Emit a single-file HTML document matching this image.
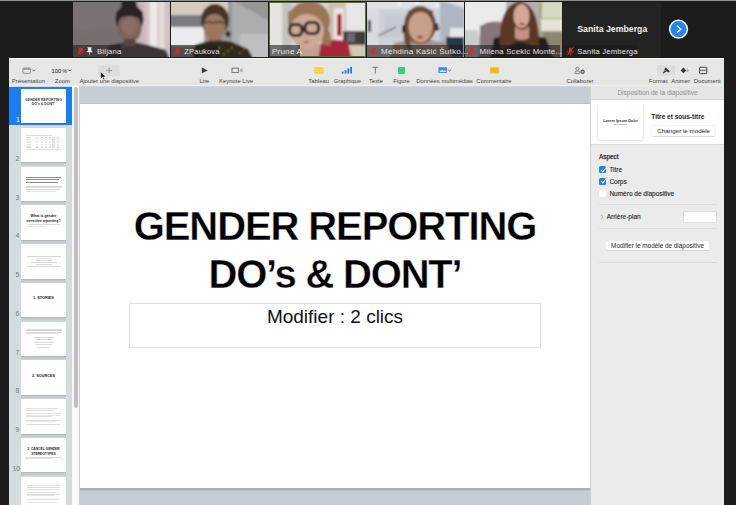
<!DOCTYPE html>
<html><head><meta charset="utf-8">
<style>
*{box-sizing:border-box;margin:0;padding:0}
html,body{width:736px;height:505px;overflow:hidden;background:#1c1c1c;font-family:"Liberation Sans",sans-serif;position:relative}
.a{position:absolute}
.t{position:absolute;white-space:nowrap;line-height:1}
/* video strip */
#topline{left:0;top:0;width:736px;height:1px;background:#8e8e8e}
.tile{position:absolute;top:2px;height:55px;width:97px;overflow:hidden;background:#555}
.lbl{position:absolute;left:0;bottom:0;height:12px;background:rgba(20,20,20,.72);color:#e6e6e6;font-size:7.5px;line-height:12px;padding-left:4px;white-space:nowrap}
/* window */
#win{left:9px;top:58px;width:714.5px;height:447px;background:#e9e9e9}
#toolbar{left:9px;top:58px;width:714.5px;height:28px;background:#e6e6e5;border-top:1.2px solid #f7f7f7;border-bottom:1px solid #eeeeee}
.lab{position:absolute;top:78.4px;width:80px;text-align:center;font-size:5.9px;color:#454545;white-space:nowrap;line-height:6px}
#sidebar{left:9px;top:86px;width:70px;height:419px;background:#d3dbdd}
.th{position:absolute;left:21px;width:45px;height:34.5px;background:#fff;box-shadow:0 1px 0 #b3b8bc,0 3.6px 0 #c5cacd}
.th .ln{position:absolute}
.tt{position:absolute;left:0;width:45px;text-align:center;font-weight:bold;color:#222;white-space:nowrap}
.tn{position:absolute;left:15.6px;font-size:6.8px;line-height:7px;color:#767c82}
.cb{position:absolute;left:599.4px;width:7px;height:7px;border-radius:1.5px;background:#fff}
.cb.on{background:#1f82f0}
.cb.on::after{content:"";position:absolute;left:2.5px;top:.7px;width:1.8px;height:3.8px;border:solid #fff;border-width:0 .9px .9px 0;transform:rotate(40deg)}
#canvas{left:79px;top:86px;width:511px;height:419px;background:#c6cdd5;border-top:1.5px solid #d0d5dc}
#slide{left:80px;top:104px;width:510px;height:384px;background:#fff;box-shadow:0 -1px 0 #b9bec4,0 2.5px 0 #abb0b5}
#panel{left:590px;top:86px;width:133.5px;height:419px;background:#ebebeb;border-left:1px solid #d0d0d0}
</style></head><body>
<svg class="a" style="left:0;top:0" width="736" height="58" viewBox="0 0 736 58">
<defs>
  <filter id="bl" x="-5%" y="-5%" width="110%" height="110%"><feGaussianBlur stdDeviation="1.1"/></filter>
  <filter id="bl2" x="-20%" y="-20%" width="140%" height="140%"><feGaussianBlur stdDeviation="2.2"/></filter>
  <clipPath id="c1"><rect x="73" y="2" width="97" height="55"/></clipPath>
  <clipPath id="c2"><rect x="171" y="2" width="97" height="55"/></clipPath>
  <clipPath id="c3"><rect x="269" y="2" width="97" height="55"/></clipPath>
  <clipPath id="c4"><rect x="367" y="2" width="97" height="55"/></clipPath>
  <clipPath id="c5"><rect x="465" y="2" width="97" height="55"/></clipPath>
  <linearGradient id="g1w" x1="0" y1="0" x2="1" y2="1"><stop offset="0" stop-color="#767072"/><stop offset=".6" stop-color="#786e70"/><stop offset="1" stop-color="#62585a"/></linearGradient>
  <linearGradient id="g1c" x1="0" y1="0" x2="1" y2="0"><stop offset="0" stop-color="#b8a8aa"/><stop offset=".5" stop-color="#e2d6d6"/><stop offset="1" stop-color="#c8babb"/></linearGradient>
</defs>
<rect x="0" y="0" width="736" height="1" fill="#8e8e8e"/>

<!-- tile 1 Biljana -->
<g clip-path="url(#c1)"><g filter="url(#bl)">
  <rect x="70" y="0" width="103" height="60" fill="url(#g1w)"/>
  <rect x="70" y="0" width="70" height="30" fill="#7e7476" opacity=".45"/>
  <rect x="136" y="0" width="37" height="60" fill="url(#g1c)"/>
  <rect x="150" y="0" width="7" height="60" fill="#f2ecec" opacity=".85"/>
  <rect x="160" y="0" width="4" height="60" fill="#ece4e4" opacity=".7"/>
  <path d="M104 60 L108 46 Q128 39 148 45 L166 50 L170 60 Z" fill="#3a3634"/>
  <ellipse cx="129.5" cy="19" rx="14" ry="15" fill="#2c2426"/>
  <ellipse cx="129.5" cy="28" rx="12" ry="14.5" fill="#7c625a"/>
  <ellipse cx="129.5" cy="26" rx="8" ry="9" fill="#8a6e66"/>
  <path d="M117 20 Q129 12 142 20 L143 12 Q129 4 116 12 Z" fill="#2c2426"/>
  <ellipse cx="129" cy="4" rx="8" ry="5" fill="#2a2224"/>
  <rect x="124" y="39" width="11" height="7" fill="#584440"/>
</g></g>

<!-- tile 2 ZPaukova -->
<g clip-path="url(#c2)"><g filter="url(#bl)">
  <rect x="168" y="0" width="103" height="60" fill="#9a9a98"/>
  <rect x="168" y="0" width="62" height="16" fill="#d4ccbc"/>
  <rect x="168" y="15" width="34" height="13" fill="#7a7c82"/>
  <rect x="168" y="27" width="36" height="19" fill="#ececef"/>
  <rect x="228" y="0" width="43" height="60" fill="#969692"/>
  <path d="M232 0 L271 22 V60 L232 60 Z" fill="#acaeae"/>
  <rect x="240" y="34" width="31" height="26" fill="#bdbfc2"/>
  <rect x="208" y="36" width="13" height="10" fill="#8c6a56"/>
  <path d="M192 60 L195 45 Q213 38 232 42 L248 49 L254 60 Z" fill="#2e2a1e"/>
  <circle cx="205" cy="50" r=".8" fill="#c8a040"/><circle cx="232" cy="48" r=".8" fill="#c8a040"/><circle cx="240" cy="53" r=".8" fill="#c8a040"/><circle cx="224" cy="54" r=".8" fill="#c8a040"/><circle cx="214" cy="55" r=".8" fill="#c8a040"/><circle cx="236" cy="44" r=".8" fill="#c8a040"/><circle cx="244" cy="49" r=".8" fill="#c8a040"/><circle cx="228" cy="51" r=".8" fill="#c8a040"/><circle cx="219" cy="48" r=".8" fill="#c8a040"/>
  <ellipse cx="215" cy="20" rx="14" ry="16" fill="#443428"/>
  <ellipse cx="214.5" cy="27" rx="11" ry="13.5" fill="#9a7660"/>
  <path d="M203 18 Q214 10 227 18 L227 13 Q214 6 203 13 Z" fill="#443428"/>
  <ellipse cx="228" cy="34" rx="2.5" ry="3" fill="#262626"/>
  <path d="M203 23 Q208 21 213 23 Q218 21 225 23" fill="none" stroke="#3a2c24" stroke-width="1.3"/>
</g></g>

<!-- tile 3 Prune A -->
<g clip-path="url(#c3)"><g filter="url(#bl)">
  <rect x="266" y="0" width="103" height="60" fill="#d8d6d2"/>
  <rect x="266" y="0" width="18" height="60" fill="#e6e4e2"/>
  <rect x="282" y="0" width="10" height="60" fill="#c6c4c0"/>
  <rect x="328" y="3" width="38" height="42" fill="#ccc0b0"/>
  <rect x="334" y="8" width="10" height="34" fill="#ebe7e2"/>
  <rect x="337" y="14" width="4.5" height="22" fill="#a81c2e"/>
  <rect x="346" y="2" width="20" height="30" fill="#e8e6e4"/>
  <rect x="343" y="31" width="23" height="14" fill="#403c3c"/>
  <rect x="347" y="33" width="8" height="9" fill="#6a6a6a"/>
  <rect x="344" y="45" width="22" height="15" fill="#d2c6b4"/>
  <path d="M296 60 L298 44 L322 44 L324 60 Z" fill="#c4a090"/>
  <path d="M318 60 L321 43 Q334 37 348 42 L352 60 Z" fill="#a8283a"/>
  <ellipse cx="309" cy="21" rx="21" ry="20" fill="#9a7656"/>
  <path d="M320 20 Q334 30 330 46 L322 44 Z" fill="#9a7656"/>
  <ellipse cx="307" cy="31" rx="17" ry="17" fill="#cca898"/>
  <path d="M288 22 Q302 9 326 16 L326 10 Q305 2 288 12 Z" fill="#9a7656"/>
  <rect x="289.6" y="24.5" width="12.4" height="11" rx="4.5" fill="none" stroke="#1a1210" stroke-width="3"/>
  <rect x="305" y="22.4" width="13.6" height="11.2" rx="4.5" fill="none" stroke="#1a1210" stroke-width="3"/>
  <ellipse cx="306" cy="42" rx="3" ry="1.2" fill="#a07070"/>
</g>
  <rect x="269.5" y="2.5" width="96" height="54" fill="none" stroke="#5c6e3c" stroke-width="1"/>
</g>

<!-- tile 4 Mehdina -->
<g clip-path="url(#c4)"><g filter="url(#bl)">
  <rect x="364" y="0" width="103" height="60" fill="#cdd1d8"/>
  <rect x="364" y="0" width="103" height="9" fill="#dde0e4"/>
  <rect x="367" y="8" width="12" height="40" fill="#d8dbe0"/>
  <rect x="384" y="14" width="18" height="24" fill="#c6cad2"/>
  <path d="M378 36 L396 27" stroke="#4e525a" stroke-width="1.2"/>
  <path d="M437 30 L450 22" stroke="#4e525a" stroke-width="1.2"/>
  <rect x="368" y="20" width="3" height="12" fill="#3a4050"/>
  <path d="M440 0 L464 8 V60 H440 Z" fill="#aeb6c2"/>
  <rect x="450" y="28" width="14" height="10" fill="#e4e8ee"/>
  <rect x="446" y="37" width="18" height="20" fill="#2c3444"/>
  <path d="M390 60 L394 43 Q420 36 446 43 L452 60 Z" fill="#a89088"/>
  <ellipse cx="420" cy="25" rx="16" ry="19" fill="#6a4a38"/>
  <path d="M404 28 Q402 46 412 52 L408 28 Z" fill="#6a4a38"/>
  <ellipse cx="420.5" cy="27" rx="12" ry="15.5" fill="#c8a08a"/>
  <path d="M408 16 Q420 8 433 16 L433 11 Q420 4 408 11 Z" fill="#6a4a38"/>
  <ellipse cx="420" cy="37" rx="3" ry="1.6" fill="#8a5a50"/>
  <rect x="402" y="25" width="3.2" height="8" rx="1.5" fill="#222"/>
  <rect x="435" y="23" width="3.2" height="8" rx="1.5" fill="#222"/>
  <circle cx="399" cy="4" r="1.6" fill="#fff"/><circle cx="417" cy="3" r="1.6" fill="#fff"/><circle cx="437" cy="5" r="1.6" fill="#fff"/>
</g></g>

<!-- tile 5 Milena -->
<g clip-path="url(#c5)"><g filter="url(#bl)">
  <rect x="462" y="0" width="103" height="60" fill="#d8d6d4"/>
  <rect x="462" y="0" width="46" height="36" fill="#ebebeb"/>
  <rect x="462" y="30" width="16" height="26" fill="#c8ccd0"/>
  <path d="M479 60 L480 26 Q492 19 504 23 L506 60 Z" fill="#86767c"/>
  <rect x="506" y="0" width="34" height="40" fill="#b4aeb0"/>
  <rect x="539" y="0" width="26" height="60" fill="#a8a48c"/>
  <rect x="542" y="2" width="22" height="16" fill="#d6dac2"/>
  <rect x="541" y="19" width="23" height="12" fill="#e6e2d6"/>
  <rect x="543" y="32" width="20" height="28" fill="#8a8670"/>
  <path d="M490 60 L494 38 Q520 31 546 38 L554 60 Z" fill="#201a1a"/>
  <path d="M500 50 Q497 6 520 1 Q540 5 539 48 L530 46 Q520 38 510 46 Z" fill="#5a3826"/>
  <path d="M515 26 Q522 34 529 26 L529 38 Q522 42 515 38 Z" fill="#c49484"/>
  <ellipse cx="521.5" cy="16" rx="8" ry="12" fill="#d4a898"/>
  <ellipse cx="522" cy="24" rx="2.6" ry="1.2" fill="#9a3a3a"/>
</g></g>

<!-- tile 6 Sanita -->
<rect x="563" y="2" width="98" height="55" fill="#232323"/>
<text x="612.3" y="32.2" text-anchor="middle" font-family="Liberation Sans" font-weight="bold" font-size="8.75" fill="#f2f2f2">Sanita Jemberga</text>
<circle cx="678.5" cy="29.2" r="9.6" fill="#fff"/>
<circle cx="678.5" cy="29.2" r="8.1" fill="#2585f5"/>
<path d="M677 25.6 L680.6 29.2 L677 32.8" fill="none" stroke="#fff" stroke-width="1.3"/>

<!-- labels -->
<rect x="73" y="45" width="47.3" height="12" fill="#1e1e1e" opacity=".6"/>
<rect x="171" y="45" width="47" height="12" fill="#1e1e1e" opacity=".6"/>
<rect x="269" y="45" width="31" height="12" fill="#1e1e1e" opacity=".6"/>
<rect x="367" y="45" width="96" height="12" fill="#1e1e1e" opacity=".6"/>
<rect x="465" y="45" width="95" height="12" fill="#1e1e1e" opacity=".6"/>
<rect x="563" y="45" width="74" height="12" fill="#1a1a1a" opacity=".5"/>
<g font-family="Liberation Sans" font-size="8.1" letter-spacing=".2" fill="#e4e4e4">
  <text x="97" y="54" font-size="7.7">Biljana</text>
  <text x="184.3" y="54" font-size="7.5">ZPaukova</text>
  <text x="272" y="54">Prune A</text>
  <text x="381" y="54">Mehdina Kašić Šutko...</text>
  <text x="479.6" y="54" font-size="7.8">Milena Scekic Monte...</text>
  <text x="577.3" y="54" font-size="7.6">Sanita Jemberga</text>
</g>
<!-- mic icons -->
<g id="mic">
  <rect x="79" y="47.4" width="3.2" height="5" rx="1.6" fill="#d42a2a"/>
  <path d="M77.8 50.6 Q77.8 53.6 80.6 53.6 Q83.4 53.6 83.4 50.6 M80.6 53.6 V55.4" fill="none" stroke="#d42a2a" stroke-width=".9"/>
  <path d="M77.6 55.4 L83.8 47" stroke="#d42a2a" stroke-width="1"/>
</g>
<use href="#mic" x="96.8"/>
<use href="#mic" x="292.8"/>
<use href="#mic" x="390.8"/>
<use href="#mic" x="489.8"/>
<!-- pin -->
<path d="M87.6 47.6 H91.6 L91 48.4 V50.6 L92.4 52 H86.8 L88.2 50.6 V48.4 Z M89.6 52 V55.4" fill="#f0f0f0" stroke="#f0f0f0" stroke-width=".5"/>
</svg>


<div id="win" class="a"></div>
<div id="toolbar" class="a"></div>
<!-- toolbar labels (centered at given x) -->
<div class="lab" style="left:-11.6px">Présentation</div>
<div class="lab" style="left:22.4px">Zoom</div>
<div class="lab" style="left:69.2px">Ajouter une diapositive</div>
<div class="lab" style="left:164.5px">Lire</div>
<div class="lab" style="left:196.1px">Keynote Live</div>
<div class="lab" style="left:278.7px">Tableau</div>
<div class="lab" style="left:307.4px">Graphique</div>
<div class="lab" style="left:336px">Texte</div>
<div class="lab" style="left:361.5px">Figure</div>
<div class="lab" style="left:404.5px">Données multimédias</div>
<div class="lab" style="left:453.9px">Commentaire</div>
<div class="lab" style="left:540px">Collaborer</div>
<div class="lab" style="left:618.2px">Format</div>
<div class="lab" style="left:640.7px">Animer</div>
<div class="lab" style="left:667.2px">Document</div>

<svg class="a" style="left:0;top:0" width="736" height="90" viewBox="0 0 736 90">
  <!-- presentation -->
  <rect x="22.9" y="68" width="7.6" height="5.4" rx="1" fill="none" stroke="#858585" stroke-width="0.85"/>
  <rect x="22.9" y="68" width="7.6" height="1.8" fill="#9a9a9a"/>
  <path d="M32.2 69.6 L33.7 71.1 L35.2 69.6" fill="none" stroke="#4a4a4a" stroke-width="0.85"/>
  <text x="51.4" y="72.7" font-family="Liberation Sans" font-size="5.9" fill="#2e2e2e" stroke="#2e2e2e" stroke-width=".05">100</text><text x="62.5" y="72.7" font-family="Liberation Sans" font-size="5" fill="#2e2e2e">%</text>
  <path d="M68.2 69.5 L69.7 71 L71.2 69.5" fill="none" stroke="#3a3a3a" stroke-width="0.95"/>
  <!-- add slide -->
  <rect x="98" y="65" width="21.6" height="11" rx="1.5" fill="#dcdcdc"/>
  <path d="M109.2 67.6 V73.4 M106.3 70.5 H112.1" stroke="#8c8c8c" stroke-width="0.8"/>
  <!-- play -->
  <path d="M201.8 67.6 L207.8 70.4 L201.8 73.3 Z" fill="#3c3c3c"/>
  <!-- keynote live -->
  <rect x="232" y="68.2" width="6.4" height="4.2" fill="none" stroke="#666" stroke-width="0.9"/>
  <path d="M240 69.2 L242.6 68.2 V72.6 L240 71.6 Z" fill="#b4b4b4"/>
  <!-- tableau -->
  <rect x="314.2" y="67.3" width="9.4" height="6.4" rx="0.8" fill="#f3cf3a"/>
  <path d="M314.2 69.5 H323.6 M314.2 71.6 H323.6" stroke="#f8e27a" stroke-width="0.6"/>
  <!-- graphique -->
  <rect x="341.8" y="71.6" width="1.8" height="1.9" fill="#1f7fe0"/>
  <rect x="344.6" y="70.2" width="1.8" height="3.3" fill="#1f7fe0"/>
  <rect x="347.4" y="68.4" width="1.8" height="5.1" fill="#1f7fe0"/>
  <rect x="350.2" y="66.8" width="1.8" height="6.7" fill="#1f7fe0"/>
  <!-- texte -->
  <path d="M372.4 67.3 H378.2 M375.3 67.3 V73.5" stroke="#6c6c6c" stroke-width="0.9"/>
  <!-- figure -->
  <rect x="397.9" y="67.1" width="7.2" height="6.8" rx="0.8" fill="#39c98a"/>
  <!-- media -->
  <rect x="438.4" y="67.3" width="8.6" height="5.6" rx="0.7" fill="#3d8ce0"/>
  <path d="M439.2 72 L441.8 69.6 L443.4 71 L444.6 70 L446.4 72 Z" fill="#d8e8f8"/>
  <path d="M447.8 69.6 L449.5 71.1 L451.2 69.6" fill="none" stroke="#666" stroke-width="0.8"/>
  <!-- commentaire -->
  <rect x="489.9" y="67.3" width="9" height="6.1" rx="0.8" fill="#f2bf1a"/>
  <path d="M491.5 69.3 H497.3 M491.5 71 H495.6" stroke="#e2a510" stroke-width="0.6"/>
  <!-- collaborer -->
  <circle cx="577.4" cy="68.8" r="1.6" fill="none" stroke="#7a7a7a" stroke-width="0.9"/>
  <path d="M575 73.4 V72.2 Q575 70.9 577.4 70.9 Q579.8 70.9 579.8 72.2 V73.4 Z" fill="none" stroke="#7a7a7a" stroke-width="0.9"/>
  <circle cx="582.6" cy="71.8" r="2.2" fill="#5a5a5a"/>
  <path d="M582.6 70.7 V72.9 M581.5 71.8 H583.7" stroke="#e6e6e6" stroke-width="0.6"/>
  <!-- format -->
  <rect x="657" y="65" width="18" height="11" rx="1.5" fill="#dcdcdc"/>
  <path d="M665.8 67.6 L669.8 71.2 L668.2 72.6 L664.2 69.2 Z" fill="#333"/>
  <path d="M664.6 70.2 L662.6 73.4 L663.4 73.6 L666.4 71.2 Z" fill="#333"/>
  <!-- animer -->
  <path d="M683.4 67.6 L686.2 70.4 L683.4 73.3 L680.6 70.4 Z" fill="#3a3a3a"/>
  <path d="M686.6 68.4 L689.2 70.4 L686.6 72.6 Z" fill="#a8a8a8"/>
  <!-- document -->
  <rect x="699.6" y="67.3" width="7.2" height="6.3" rx="0.6" fill="none" stroke="#444" stroke-width="1"/>
  <path d="M699.6 70.3 H706.8" stroke="#444" stroke-width="0.8"/>
  <!-- cursor -->
  <path d="M100.6 71.6 L100.6 79 L102.4 77.3 L103.6 80 L104.8 79.5 L103.6 76.9 L106 76.8 Z" fill="#111" stroke="#fff" stroke-width=".6"/>
</svg>

<div id="sidebar" class="a"></div>
<div class="a" style="left:9px;top:86.6px;width:63px;height:38px;background:#1a7ef2"></div>
<div class="a" style="left:72px;top:86px;width:8px;height:419px;background:#f8f8f8"></div>
<div class="a" style="left:73.8px;top:87px;width:4.4px;height:320.5px;border-radius:2px;background:#c2bec2"></div>
<div id="thumbs">
<div class="th" style="top:89px;height:34px;box-shadow:none">
  <div class="tt" style="top:8.8px;font-size:3.5px;line-height:4.2px;color:#3a3a3a">GENDER REPORTING<br>DO’s &amp; DONT’</div>
</div>
<div class="tn" style="top:116.2px;color:#fff;left:16px">1</div>
<div class="th" style="top:127.8px">
  <div class="ln" style="left:5px;top:7.2px;width:26px;height:.5px;background:#dedede"></div>
  <div class="ln" style="left:5px;top:9.5px;width:5px;height:.6px;background:#d9d9d9"></div>
  <div class="ln" style="left:15px;top:9.5px;width:2.4px;height:.6px;background:#d9d9d9"></div>
  <div class="ln" style="left:19.5px;top:9.5px;width:2.4px;height:.6px;background:#d9d9d9"></div>
  <div class="ln" style="left:24px;top:9.5px;width:2.4px;height:.6px;background:#d9d9d9"></div>
  <div class="ln" style="left:28px;top:9.5px;width:2.4px;height:.6px;background:#d9d9d9"></div>
  <div class="ln" style="left:32px;top:9.5px;width:2.4px;height:.6px;background:#d9d9d9"></div>
  <div class="ln" style="left:36px;top:9.5px;width:2.4px;height:.6px;background:#d9d9d9"></div>
  <div class="ln" style="left:5px;top:11.2px;width:5px;height:.6px;background:#e5e5e5"></div>
  <div class="ln" style="left:15px;top:11.2px;width:2.4px;height:.6px;background:#e5e5e5"></div>
  <div class="ln" style="left:19.5px;top:11.2px;width:2.4px;height:.6px;background:#e5e5e5"></div>
  <div class="ln" style="left:24px;top:11.2px;width:2.4px;height:.6px;background:#e5e5e5"></div>
  <div class="ln" style="left:28px;top:11.2px;width:2.4px;height:.6px;background:#e5e5e5"></div>
  <div class="ln" style="left:32px;top:11.2px;width:2.4px;height:.6px;background:#e5e5e5"></div>
  <div class="ln" style="left:36px;top:11.2px;width:2.4px;height:.6px;background:#e5e5e5"></div>
  <div class="ln" style="left:5px;top:12.9px;width:5px;height:.6px;background:#e5e5e5"></div>
  <div class="ln" style="left:15px;top:12.9px;width:2.4px;height:.6px;background:#e5e5e5"></div>
  <div class="ln" style="left:19.5px;top:12.9px;width:2.4px;height:.6px;background:#e5e5e5"></div>
  <div class="ln" style="left:24px;top:12.9px;width:2.4px;height:.6px;background:#e5e5e5"></div>
  <div class="ln" style="left:28px;top:12.9px;width:2.4px;height:.6px;background:#e5e5e5"></div>
  <div class="ln" style="left:32px;top:12.9px;width:2.4px;height:.6px;background:#e5e5e5"></div>
  <div class="ln" style="left:36px;top:12.9px;width:2.4px;height:.6px;background:#e5e5e5"></div>
  <div class="ln" style="left:5px;top:14.6px;width:5px;height:.6px;background:#e5e5e5"></div>
  <div class="ln" style="left:15px;top:14.6px;width:2.4px;height:.6px;background:#e5e5e5"></div>
  <div class="ln" style="left:19.5px;top:14.6px;width:2.4px;height:.6px;background:#e5e5e5"></div>
  <div class="ln" style="left:24px;top:14.6px;width:2.4px;height:.6px;background:#e5e5e5"></div>
  <div class="ln" style="left:28px;top:14.6px;width:2.4px;height:.6px;background:#e5e5e5"></div>
  <div class="ln" style="left:32px;top:14.6px;width:2.4px;height:.6px;background:#e5e5e5"></div>
  <div class="ln" style="left:36px;top:14.6px;width:2.4px;height:.6px;background:#e5e5e5"></div>
  <div class="ln" style="left:5px;top:16.3px;width:5px;height:.6px;background:#e5e5e5"></div>
  <div class="ln" style="left:15px;top:16.3px;width:2.4px;height:.6px;background:#e5e5e5"></div>
  <div class="ln" style="left:19.5px;top:16.3px;width:2.4px;height:.6px;background:#e5e5e5"></div>
  <div class="ln" style="left:24px;top:16.3px;width:2.4px;height:.6px;background:#e5e5e5"></div>
  <div class="ln" style="left:28px;top:16.3px;width:2.4px;height:.6px;background:#e5e5e5"></div>
  <div class="ln" style="left:32px;top:16.3px;width:2.4px;height:.6px;background:#e5e5e5"></div>
  <div class="ln" style="left:36px;top:16.3px;width:2.4px;height:.6px;background:#e5e5e5"></div>
  <div class="ln" style="left:5px;top:18.0px;width:5px;height:.6px;background:#e5e5e5"></div>
  <div class="ln" style="left:15px;top:18.0px;width:2.4px;height:.6px;background:#e5e5e5"></div>
  <div class="ln" style="left:19.5px;top:18.0px;width:2.4px;height:.6px;background:#e5e5e5"></div>
  <div class="ln" style="left:24px;top:18.0px;width:2.4px;height:.6px;background:#e5e5e5"></div>
  <div class="ln" style="left:28px;top:18.0px;width:2.4px;height:.6px;background:#e5e5e5"></div>
  <div class="ln" style="left:32px;top:18.0px;width:2.4px;height:.6px;background:#e5e5e5"></div>
  <div class="ln" style="left:36px;top:18.0px;width:2.4px;height:.6px;background:#e5e5e5"></div>
  <div class="ln" style="left:5px;top:19.7px;width:5px;height:.6px;background:#d9d9d9"></div>
  <div class="ln" style="left:15px;top:19.7px;width:2.4px;height:.6px;background:#d9d9d9"></div>
  <div class="ln" style="left:19.5px;top:19.7px;width:2.4px;height:.6px;background:#d9d9d9"></div>
  <div class="ln" style="left:24px;top:19.7px;width:2.4px;height:.6px;background:#d9d9d9"></div>
  <div class="ln" style="left:28px;top:19.7px;width:2.4px;height:.6px;background:#d9d9d9"></div>
  <div class="ln" style="left:32px;top:19.7px;width:2.4px;height:.6px;background:#d9d9d9"></div>
  <div class="ln" style="left:36px;top:19.7px;width:2.4px;height:.6px;background:#d9d9d9"></div>
  <div class="ln" style="left:31.4px;top:8.8px;width:3px;height:11.8px;background:#e6e6e6"></div>
  <div class="ln" style="left:5px;top:21.4px;width:35px;height:.4px;background:#e1e1e1"></div>
</div>
<div class="tn" style="top:154.8px">2</div>
<div class="th" style="top:166.5px">
  <div class="ln" style="left:4.5px;top:10px;width:35px;height:.9px;background:#8a8a8a"></div>
  <div class="ln" style="left:4.5px;top:12.6px;width:33px;height:.9px;background:#8a8a8a"></div>
  <div class="ln" style="left:4.5px;top:15.2px;width:32px;height:.9px;background:#8a8a8a"></div>
  <div class="ln" style="left:4.5px;top:19px;width:36px;height:.5px;background:#d2d2d2"></div>
  <div class="ln" style="left:4.5px;top:20.5px;width:36px;height:.5px;background:#e3e3e3"></div>
  <div class="ln" style="left:4.5px;top:22.5px;width:34px;height:.5px;background:#d2d2d2"></div>
  <div class="ln" style="left:4.5px;top:24px;width:30px;height:.5px;background:#e3e3e3"></div>
</div>
<div class="tn" style="top:193.5px">3</div>
<div class="th" style="top:205.3px">
  <div class="tt" style="top:9px;font-size:3.6px;line-height:4.4px">What is gender<br>sensitive reporting?</div>
  <div class="ln" style="left:7px;top:19px;width:32px;height:.5px;background:#dbdbdb"></div>
  <div class="ln" style="left:7px;top:20.4px;width:18px;height:.5px;background:#e3e3e3"></div>
</div>
<div class="tn" style="top:232.3px">4</div>
<div class="th" style="top:244.1px">
  <div class="ln" style="left:6px;top:11.5px;width:34px;height:.6px;background:#d5d5d5"></div>
  <div class="ln" style="left:15px;top:13.5px;width:16px;height:.6px;background:#dbdbdb"></div>
  <div class="ln" style="left:14px;top:15.5px;width:18px;height:.6px;background:#dbdbdb"></div>
  <div class="ln" style="left:10px;top:17.5px;width:26px;height:.6px;background:#d5d5d5"></div>
  <div class="ln" style="left:15px;top:19.5px;width:16px;height:.6px;background:#dbdbdb"></div>
  <div class="ln" style="left:6px;top:21.5px;width:34px;height:.6px;background:#d5d5d5"></div>
</div>
<div class="tn" style="top:271.1px">5</div>
<div class="th" style="top:282.9px">
  <div class="tt" style="top:13.5px;font-size:3.8px;line-height:4px">1. STORIES</div>
</div>
<div class="tn" style="top:309.9px">6</div>
<div class="th" style="top:321.6px">
  <div class="ln" style="left:5px;top:7px;width:36px;height:.6px;background:#dbdbdb"></div>
  <div class="ln" style="left:5px;top:8.6px;width:36px;height:.6px;background:#d5d5d5"></div>
  <div class="ln" style="left:5px;top:10.2px;width:36px;height:.6px;background:#dfdfdf"></div>
  <div class="ln" style="left:5px;top:11.8px;width:32px;height:.6px;background:#dfdfdf"></div>
  <div class="ln" style="left:13px;top:15px;width:20px;height:.5px;background:#dbdbdb"></div>
  <div class="ln" style="left:14px;top:17.6px;width:18px;height:.5px;background:#dbdbdb"></div>
  <div class="ln" style="left:13px;top:20.2px;width:20px;height:.5px;background:#dbdbdb"></div>
  <div class="ln" style="left:15px;top:22.8px;width:16px;height:.5px;background:#dbdbdb"></div>
  <div class="ln" style="left:16px;top:25.4px;width:13px;height:.5px;background:#dbdbdb"></div>
</div>
<div class="tn" style="top:348.6px">7</div>
<div class="th" style="top:360.4px">
  <div class="tt" style="top:13.6px;font-size:3.8px;line-height:4px">2. SOURCES</div>
</div>
<div class="tn" style="top:387.4px">8</div>
<div class="th" style="top:399.2px">
  <div class="ln" style="left:5px;top:9px;width:32px;height:.6px;background:#dfdfdf"></div>
  <div class="ln" style="left:5px;top:10.6px;width:28px;height:.6px;background:#dbdbdb"></div>
  <div class="ln" style="left:5px;top:14px;width:35px;height:.6px;background:#dfdfdf"></div>
  <div class="ln" style="left:5px;top:15.6px;width:35px;height:.6px;background:#e6e6e6"></div>
  <div class="ln" style="left:5px;top:17.2px;width:26px;height:.6px;background:#dfdfdf"></div>
  <div class="ln" style="left:5px;top:20.5px;width:35px;height:.6px;background:#dfdfdf"></div>
  <div class="ln" style="left:5px;top:22.1px;width:30px;height:.6px;background:#e6e6e6"></div>
  <div class="ln" style="left:5px;top:25.3px;width:34px;height:.6px;background:#dbdbdb"></div>
</div>
<div class="tn" style="top:426.2px">9</div>
<div class="th" style="top:437.9px">
  <div class="tt" style="top:9.5px;font-size:3.3px;line-height:4.2px">3. CANCEL GENDER<br>STEREOTYPES</div>
  <div class="ln" style="left:4px;top:19px;width:37px;height:.5px;background:#dbdbdb"></div>
  <div class="ln" style="left:4px;top:20.3px;width:28px;height:.5px;background:#e3e3e3"></div>
</div>
<div class="tn" style="top:464.9px;left:12.6px">10</div>
<div class="th" style="top:476.7px">
  <div class="ln" style="left:6px;top:8px;width:33px;height:.6px;background:#dfdfdf"></div>
  <div class="ln" style="left:6px;top:10.5px;width:33px;height:.6px;background:#dbdbdb"></div>
  <div class="ln" style="left:6px;top:12px;width:33px;height:.6px;background:#dfdfdf"></div>
  <div class="ln" style="left:6px;top:15.5px;width:30px;height:.6px;background:#dfdfdf"></div>
  <div class="ln" style="left:6px;top:17px;width:33px;height:.6px;background:#dbdbdb"></div>
  <div class="ln" style="left:6px;top:18.5px;width:28px;height:.6px;background:#e6e6e6"></div>
  <div class="ln" style="left:6px;top:22px;width:32px;height:.6px;background:#dfdfdf"></div>
  <div class="ln" style="left:6px;top:25px;width:30px;height:.6px;background:#e6e6e6"></div>
</div>
</div>
<div id="canvas" class="a"></div>
<div id="slide" class="a"></div>
<div class="t" id="tl1" style="left:0;width:670px;text-align:center;top:206px;font-size:40px;font-weight:bold;color:#000;letter-spacing:-1.1px;-webkit-text-stroke:.35px #fff">GENDER REPORTING</div>
<div class="t" id="tl2" style="left:0;width:670px;text-align:center;top:254px;font-size:40px;font-weight:bold;color:#000;letter-spacing:-1.2px;-webkit-text-stroke:.35px #fff">DO’s &amp; DONT’</div>
<div class="a" style="left:129px;top:303px;width:411.5px;height:44.6px;border:1px solid #e0e0e0"></div>
<div class="t" id="sub" style="left:0;width:670px;text-align:center;top:306.6px;font-size:19px;color:#111">Modifier : 2 clics</div>

<div id="panel" class="a"></div>
<div class="a" style="left:591px;top:86px;width:132.5px;height:13.6px;background:#e5e5e5;border-bottom:1px solid #d6d6d6"></div>
<div class="t" style="left:591px;width:133px;text-align:center;top:90.3px;font-size:6.5px;color:#8e8e8e">Disposition de la diapositive</div>
<div class="a" style="left:591px;top:99.6px;width:132.5px;height:45.4px;background:#fff;border-bottom:1px solid #dadada"></div>
<div class="a" style="left:598px;top:104.6px;width:45.3px;height:35.3px;background:#fff;box-shadow:0 .6px 1.4px rgba(0,0,0,.35)"></div>
<div class="t" style="left:598px;width:45.3px;text-align:center;top:120.3px;font-size:3.8px;font-weight:bold;color:#333">Lorem Ipsum Dolor</div>
<div class="a" style="left:614px;top:124.2px;width:13px;height:.6px;background:#c4c4c4"></div>
<div class="t" style="left:651.3px;top:114.4px;font-size:6.5px;font-weight:bold;color:#1e1e1e">Titre et sous-titre</div>
<div class="a" style="left:652px;top:126.3px;width:63.3px;height:9.8px;background:#fff;border-radius:1.5px;box-shadow:0 0 0 .4px rgba(0,0,0,.08),0 .6px 1px rgba(0,0,0,.12)"></div>
<div class="t" style="left:652px;width:63.3px;text-align:center;top:128px;font-size:6.26px;color:#262626">Changer le modèle</div>

<div class="t" style="left:599px;top:154px;font-size:6.4px;color:#2a2a2a;-webkit-text-stroke:.25px #2a2a2a">Aspect</div>
<div class="cb on" style="top:165.9px"></div>
<div class="t" style="left:609.4px;top:166.8px;font-size:6.5px;color:#262626;-webkit-text-stroke:.12px #262626">Titre</div>
<div class="cb on" style="top:177.7px"></div>
<div class="t" style="left:609.4px;top:178.6px;font-size:6.5px;color:#262626;-webkit-text-stroke:.12px #262626">Corps</div>
<div class="cb" style="top:190.1px"></div>
<div class="t" style="left:609.4px;top:191px;font-size:6.5px;color:#262626;-webkit-text-stroke:.12px #262626">Numéro de diapositive</div>
<div class="a" style="left:599px;top:204px;width:118px;height:1px;background:#dcdcdc"></div>
<svg class="a" style="left:599px;top:213px" width="6" height="8"><path d="M1.8 1.8 L4 3.9 L1.8 6" fill="none" stroke="#9a9a9a" stroke-width=".8"/></svg>
<div class="t" style="left:606.7px;top:213.9px;font-size:6.5px;color:#262626;-webkit-text-stroke:.12px #262626">Arrière-plan</div>
<div class="a" style="left:684.2px;top:212.4px;width:31.8px;height:9.5px;background:#fff;box-shadow:0 0 0 .5px rgba(0,0,0,.1)"></div>
<div class="a" style="left:599px;top:228.3px;width:118px;height:1px;background:#dcdcdc"></div>
<div class="a" style="left:606.2px;top:240.8px;width:102.7px;height:9.6px;background:#fff;border-radius:1.5px;box-shadow:0 .5px .8px rgba(0,0,0,.1)"></div>
<div class="t" style="left:606.2px;width:102.7px;text-align:center;top:242.5px;font-size:6.38px;color:#262626">Modifier le modèle de diapositive</div>
<div class="a" style="left:599px;top:261.6px;width:118px;height:1px;background:#dcdcdc"></div>
</body></html>
